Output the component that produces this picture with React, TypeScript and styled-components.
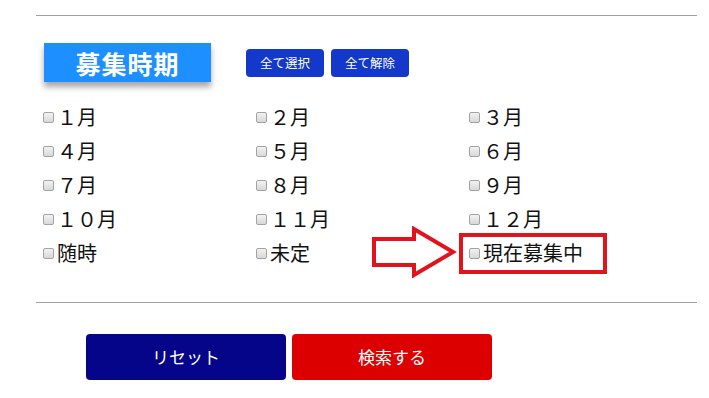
import styled, { createGlobalStyle } from "styled-components";

const GlobalStyle = createGlobalStyle`
  body {
    margin: 0;
    background: #fff;
    font-family: "Noto Sans CJK JP", "Noto Sans", sans-serif;
    color: #111;
  }
`;

const Page = styled.div`
  width: 661px;
  padding: 15px 0 0 36px;
`;

const Rule = styled.hr`
  margin: 0;
  border: none;
  border-top: 1px solid #a0a0a0;
`;

const Header = styled.div`
  display: flex;
  align-items: center;
  padding: 27px 0 0 8px;
`;

const Heading = styled.h2`
  margin: 0;
  width: 167px;
  height: 39px;
  display: flex;
  align-items: center;
  justify-content: center;
  background: #1e8fff;
  color: #fff;
  font-size: 25px;
  font-weight: bold;
  letter-spacing: 1px;
  box-shadow: 0 5px 6px rgba(0, 0, 0, 0.35);
`;

const SmallButtons = styled.div`
  display: flex;
  gap: 7px;
  margin-left: 35px;
`;

const SmallButton = styled.button`
  width: 78px;
  height: 28px;
  border: none;
  border-radius: 4px;
  background: #1438c9;
  color: #fff;
  font-family: inherit;
  font-size: 12.5px;
  padding: 0;
`;

const Grid = styled.div`
  display: grid;
  grid-template-columns: repeat(3, 213px);
  grid-auto-rows: 34px;
  padding: 18px 0 32px 7px;
`;

const Cell = styled.label`
  position: relative;
  display: flex;
  align-items: center;
  font-size: 20px;
  line-height: 1;
`;

const Box = styled.input`
  appearance: none;
  flex: none;
  width: 11px;
  height: 11px;
  margin: 0 3px 0 0;
  border: 1px solid #a3a3a3;
  border-radius: 2px;
  background: linear-gradient(#f2f2f2, #d8d8d8);
`;

const Highlight = styled.span`
  position: absolute;
  left: -10px;
  top: -3px;
  width: 140px;
  height: 33px;
  border: 4px solid #e1141e;
  pointer-events: none;
`;

const Arrow = styled.svg`
  position: absolute;
  left: -98px;
  top: -10px;
`;

const Actions = styled.div`
  display: flex;
  gap: 6px;
  padding: 31px 0 0 50px;
`;

const BigButton = styled.button<{ $tone: "navy" | "red" }>`
  width: 200px;
  height: 46px;
  border: none;
  border-radius: 4px;
  background: ${(p) => (p.$tone === "navy" ? "#05058a" : "#dd0000")};
  color: #fff;
  font-family: inherit;
  font-size: 17px;
  padding: 0 0 2px;
`;

const items = [
  "１月", "２月", "３月",
  "４月", "５月", "６月",
  "７月", "８月", "９月",
  "１０月", "１１月", "１２月",
  "随時", "未定", "現在募集中",
];

export default function App() {
  return (
    <Page>
      <GlobalStyle />
      <Rule />
      <Header>
        <Heading>募集時期</Heading>
        <SmallButtons>
          <SmallButton>全て選択</SmallButton>
          <SmallButton>全て解除</SmallButton>
        </SmallButtons>
      </Header>
      <Grid>
        {items.map((item) => (
          <Cell key={item}>
            <Box type="checkbox" />
            {item}
            {item === "現在募集中" && (
              <>
                <Highlight />
                <Arrow width="86" height="52" viewBox="0 0 86 52">
                  <path
                    d="M3 13 H43 V3 L82 26 L43 49 V39 H3 Z"
                    fill="none"
                    stroke="#e1141e"
                    strokeWidth="4"
                    strokeLinejoin="miter"
                  />
                </Arrow>
              </>
            )}
          </Cell>
        ))}
      </Grid>
      <Rule />
      <Actions>
        <BigButton $tone="navy">リセット</BigButton>
        <BigButton $tone="red">検索する</BigButton>
      </Actions>
    </Page>
  );
}
